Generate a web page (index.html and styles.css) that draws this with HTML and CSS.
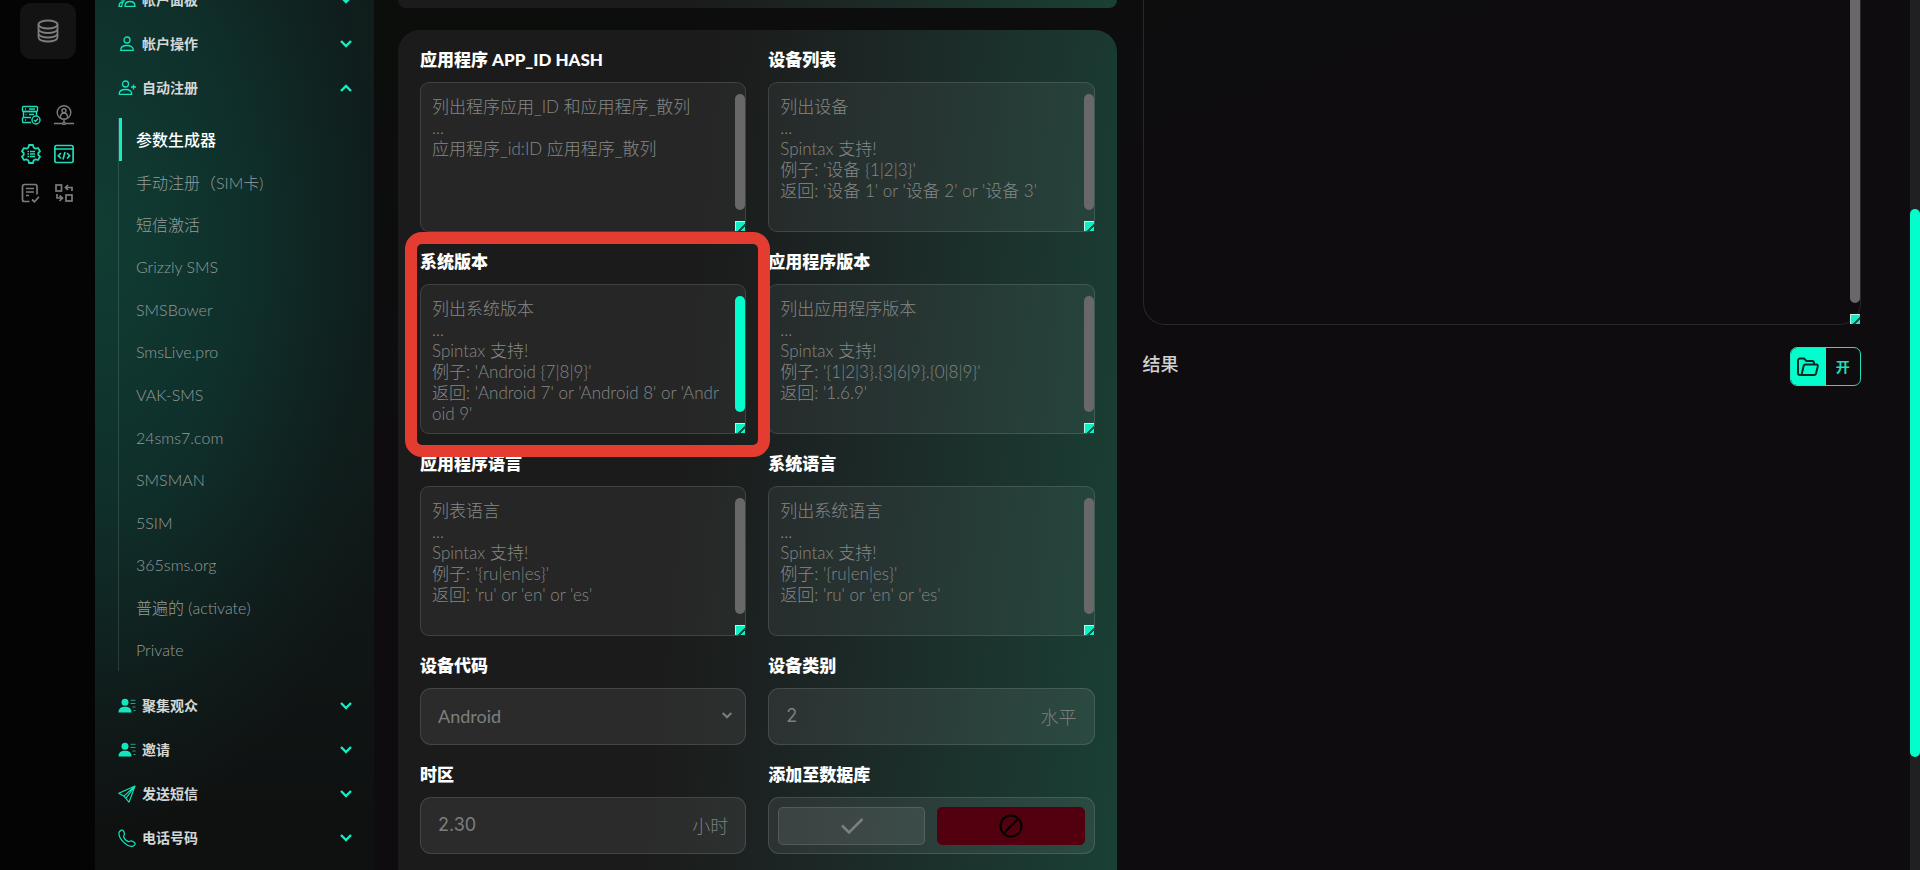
FILE: index.html
```html
<!DOCTYPE html>
<html lang="zh-CN">
<head>
    <meta charset="utf-8">
    <title>参数生成器</title>
    <link rel="stylesheet" href="styles.css">
</head>
<body>
    <svg class="defs" width="0" height="0" aria-hidden="true">
        <symbol id="down" viewBox="0 0 14 10"><path d="M2 2l5 5 5-5" fill="none" stroke="currentColor" stroke-width="2.4"/></symbol>
        <symbol id="up" viewBox="0 0 14 10"><path d="M2 8l5-5 5 5" fill="none" stroke="currentColor" stroke-width="2.4"/></symbol>
        <symbol id="people" viewBox="0 0 18 18"><g fill="none" stroke="currentColor" stroke-width="1.3"><circle cx="5" cy="7" r="2.2"/><circle cx="12" cy="5" r="3"/><path d="M1 15.3c0-3 1.500-4.500 4.300-4.500-1.300 1.200-1.600 2.600-1.600 4.500zM7 15.300c0-3 1.600-4.800 5-4.800s5 1.800 5 4.800z"/></g></symbol>
        <symbol id="person" viewBox="0 0 18 18"><g fill="none" stroke="currentColor" stroke-width="1.3"><circle cx="9" cy="5" r="3"/><path d="M2.700 15.300c0-3 2.300-4.800 6.300-4.800s6.300 1.800 6.300 4.800z" stroke-linejoin="round"/></g></symbol>
        <symbol id="person-add" viewBox="0 0 18 18"><g fill="none" stroke="currentColor" stroke-width="1.3"><circle cx="7.500" cy="5" r="3"/><path d="M1.200 15.300c0-3 2.300-4.800 6.300-4.800s6.300 1.800 6.300 4.800z" stroke-linejoin="round"/><path d="M15.500 5.500v5M13 8h5"/></g></symbol>
        <symbol id="audience" viewBox="0 0 18 18"><circle cx="7" cy="5.200" r="3.500" fill="currentColor"/><path d="M0.500 15.500c0-4 2.500-5.700 6.500-5.700s6.500 1.700 6.500 5.700z" fill="currentColor"/><path d="M12.500 3.300h5M12.500 6.500h5M14.500 10h3M15.500 13.500h2" stroke="currentColor" stroke-width="1" opacity=".7"/></symbol>
        <symbol id="plane" viewBox="0 0 18 18"><path d="M17 1L.8 8.200l5.200 3L11 17.200zM17 1L6 11.200M17 1L8.300 12.800" fill="none" stroke="currentColor" stroke-width="1.100" stroke-linejoin="round"/></symbol>
        <symbol id="phone" viewBox="0 0 18 18"><path d="M1 3.500C2 1.500 3.800.6 4.800 1.200c1 .9 1.600 2.300 1.700 3.800.1 1.200-1.200 1.500-.9 2.700.5 2 2.500 4.100 4.700 4.900 1.200.5 1.800-.9 3-.7 1.500.3 2.900 1 3.700 2.200.7 1.300-1 2.900-2.900 3.200C9 18 .2 9.500 1 3.500z" fill="none" stroke="currentColor" stroke-width="1.200"/></symbol>
    </svg>

    <div class="app">
        <aside class="rail">
            <button class="rail-main" aria-label="数据库">
                <svg width="24" height="24" viewBox="0 0 24 24" fill="none" stroke="currentColor" stroke-width="1.800"><ellipse cx="12" cy="5.500" rx="9.500" ry="4"/><path d="M2.500 5.500v13c0 2.200 4.200 4 9.500 4s9.500-1.800 9.500-4v-13M2.500 10c0 2.200 4.200 4 9.500 4s9.500-1.800 9.500-4M2.500 14.500c0 2.200 4.200 4 9.500 4s9.500-1.800 9.500-4"/></svg>
            </button>
            <div class="rail-icons">
                <a href="#" class="on" aria-label="服务器">
                    <svg width="20" height="20" viewBox="0 0 20 20" fill="none" stroke="currentColor" stroke-width="1.400"><rect x="1.500" y="1.500" width="15" height="5" rx="1"/><path d="M10 12.500H2.500v-6h13v4M10 17.500H2.500a1 1 0 0 1-1-1v-3a1 1 0 0 1 1-1M4 4h1M8 4h6M4.500 9.500h1M8 9.500h5M4 15h1"/><circle cx="15" cy="15" r="4"/><path d="M13 15l1.500 1.500 2.500-3"/></svg>
                </a>
                <a href="#" aria-label="代理">
                    <svg width="20" height="20" viewBox="0 0 20 20" fill="none" stroke="currentColor" stroke-width="1.400"><circle cx="10" cy="7.500" r="6.800"/><circle cx="10" cy="5.800" r="2"/><path d="M6.500 12.500c0-3 1-4.500 3.500-4.500s3.500 1.500 3.500 4.500M10 14.500v3M0 18.500h8.500M11.500 18.500H20"/><circle cx="10" cy="18.500" r="1.200"/></svg>
                </a>
                <a href="#" class="on" aria-label="设置">
                    <svg width="20" height="20" viewBox="0 0 20 20" fill="none" stroke="currentColor" stroke-width="1.800" stroke-linejoin="round"><path d="M8 1h4l.6 2.500 2 1.200L17 4l2 3.300L17.300 9v2l1.700 1.700L17 16l-2.400-.7-2 1.200L12 19H8l-.6-2.500-2-1.200L3 16l-2-3.300L2.700 11V9L1 7.300 3 4l2.400.7 2-1.200z"/><path d="M6.500 7.500h1.500M9 7.500h5M6.500 10h1.500M9 10h5M6.500 12.500h1.500M9 12.500h5" stroke-width="1.600"/></svg>
                </a>
                <a href="#" class="on" aria-label="代码">
                    <svg width="20" height="20" viewBox="0 0 20 20" fill="none" stroke="currentColor" stroke-width="1.700"><rect x=".9" y="1.500" width="18.200" height="17" rx="1.500"/><path d="M1 5h18M7 9l-2.700 2.700L7 14.500M13 9l2.700 2.700L13 14.500M11 8l-2 7.500"/></svg>
                </a>
                <a href="#" aria-label="任务">
                    <svg width="20" height="20" viewBox="0 0 20 20" fill="none" stroke="currentColor" stroke-width="1.700"><path d="M8.500 18.500h-5a2 2 0 0 1-2-2v-13a2 2 0 0 1 2-2H14a2 2 0 0 1 2 2v8M5 5.500h8M5 9h8M5 12.500h3M11 16.500l2.500 2.300 4.500-5"/></svg>
                </a>
                <a href="#" aria-label="交换">
                    <svg width="20" height="20" viewBox="0 0 20 20" fill="none" stroke="currentColor" stroke-width="1.700"><rect x="2" y="2" width="5.500" height="6"/><rect x="12" y="12" width="6" height="6"/><path d="M18 8V4.500h-6M14 2l-2.500 2.500L14 7M3 11v4h5M5.500 12.500L8.500 15 5.500 18"/></svg>
                </a>
            </div>
        </aside>

        <nav class="sidebar">
            <a href="#" class="menu"><svg class="mi"><use href="#people"/></svg>帐户面板<svg class="arrow"><use href="#down"/></svg></a>
            <a href="#" class="menu"><svg class="mi"><use href="#person"/></svg>帐户操作<svg class="arrow"><use href="#down"/></svg></a>
            <a href="#" class="menu"><svg class="mi"><use href="#person-add"/></svg>自动注册<svg class="arrow"><use href="#up"/></svg></a>
            <ul class="submenu">
                <li class="active"><a href="#">参数生成器</a></li>
                <li><a href="#">手动注册（SIM卡)</a></li>
                <li><a href="#">短信激活</a></li>
                <li><a href="#">Grizzly SMS</a></li>
                <li><a href="#">SMSBower</a></li>
                <li><a href="#">SmsLive.pro</a></li>
                <li><a href="#">VAK-SMS</a></li>
                <li><a href="#">24sms7.com</a></li>
                <li><a href="#">SMSMAN</a></li>
                <li><a href="#">5SIM</a></li>
                <li><a href="#">365sms.org</a></li>
                <li><a href="#">普遍的 (activate)</a></li>
                <li><a href="#">Private</a></li>
            </ul>
            <a href="#" class="menu"><svg class="mi"><use href="#audience"/></svg>聚集观众<svg class="arrow"><use href="#down"/></svg></a>
            <a href="#" class="menu"><svg class="mi"><use href="#audience"/></svg>邀请<svg class="arrow"><use href="#down"/></svg></a>
            <a href="#" class="menu"><svg class="mi"><use href="#plane"/></svg>发送短信<svg class="arrow"><use href="#down"/></svg></a>
            <a href="#" class="menu"><svg class="mi"><use href="#phone"/></svg>电话号码<svg class="arrow"><use href="#down"/></svg></a>
        </nav>

        <main class="content">
            <div class="left">
                <section class="card card-prev"></section>
                <section class="card form">
                    <div class="field">
                        <label for="appId">应用程序 APP_ID HASH</label>
                        <div class="area">
                            <textarea id="appId" placeholder="列出程序应用_ID 和应用程序_散列&#10;...&#10;应用程序_id:ID 应用程序_散列"></textarea>
                            <span class="thumb"></span><span class="grip"></span>
                        </div>
                    </div>
                    <div class="field">
                        <label for="devices">设备列表</label>
                        <div class="area">
                            <textarea id="devices" placeholder="列出设备&#10;...&#10;Spintax 支持!&#10;例子: '设备 {1|2|3}'&#10;返回: '设备 1' or '设备 2' or '设备 3'"></textarea>
                            <span class="thumb"></span><span class="grip"></span>
                        </div>
                    </div>
                    <div class="field marked">
                        <label for="sysVersion">系统版本</label>
                        <div class="area">
                            <textarea id="sysVersion" placeholder="列出系统版本&#10;...&#10;Spintax 支持!&#10;例子: 'Android {7|8|9}'&#10;返回: 'Android 7' or 'Android 8' or 'Android 9'"></textarea>
                            <span class="thumb"></span><span class="grip"></span>
                        </div>
                    </div>
                    <div class="field">
                        <label for="appVersion">应用程序版本</label>
                        <div class="area">
                            <textarea id="appVersion" placeholder="列出应用程序版本&#10;...&#10;Spintax 支持!&#10;例子: '{1|2|3}.{3|6|9}.{0|8|9}'&#10;返回: '1.6.9'"></textarea>
                            <span class="thumb"></span><span class="grip"></span>
                        </div>
                    </div>
                    <div class="field">
                        <label for="appLang">应用程序语言</label>
                        <div class="area">
                            <textarea id="appLang" placeholder="列表语言&#10;...&#10;Spintax 支持!&#10;例子: '{ru|en|es}'&#10;返回: 'ru' or 'en' or 'es'"></textarea>
                            <span class="thumb"></span><span class="grip"></span>
                        </div>
                    </div>
                    <div class="field">
                        <label for="sysLang">系统语言</label>
                        <div class="area">
                            <textarea id="sysLang" placeholder="列出系统语言&#10;...&#10;Spintax 支持!&#10;例子: '{ru|en|es}'&#10;返回: 'ru' or 'en' or 'es'"></textarea>
                            <span class="thumb"></span><span class="grip"></span>
                        </div>
                    </div>
                    <div class="field">
                        <label for="deviceCode">设备代码</label>
                        <div class="box">
                            <select id="deviceCode"><option>Android</option></select>
                            <svg class="caret"><use href="#down"/></svg>
                        </div>
                    </div>
                    <div class="field">
                        <label for="deviceClass">设备类别</label>
                        <div class="box"><input type="text" id="deviceClass" placeholder="2"><span class="unit">水平</span></div>
                    </div>
                    <div class="field">
                        <label for="timezone">时区</label>
                        <div class="box"><input type="text" id="timezone" placeholder="2.30"><span class="unit">小时</span></div>
                    </div>
                    <div class="field" role="group" aria-labelledby="addDb">
                        <span class="title" id="addDb">添加至数据库</span>
                        <div class="box choice">
                            <button class="yes" aria-label="是"><svg width="24" height="18" viewBox="0 0 24 18"><path d="M2 8.500l7 7L22.500 2" fill="none" stroke="currentColor" stroke-width="2.500"/></svg></button>
                            <button class="no" aria-label="否"><svg width="24" height="24" viewBox="0 0 24 24" fill="none" stroke="currentColor" stroke-width="2"><circle cx="12" cy="12" r="10.500"/><path d="M4.500 19.500l15-15"/></svg></button>
                        </div>
                    </div>
                </section>
            </div>

            <div class="right">
                <div class="area output">
                    <textarea aria-label="输出"></textarea>
                    <span class="thumb"></span><span class="grip"></span>
                </div>
                <div class="result">
                    <h2>结果</h2>
                    <button class="open">
                        <span class="folder"><svg width="22" height="20" viewBox="0 0 22 20" fill="none" stroke="currentColor" stroke-width="2" stroke-linejoin="round"><path d="M5.500 18H3a2 2 0 0 1-2-2V3.500a2 2 0 0 1 2-2h4L9.500 4H15a2 2 0 0 1 2 2v1.500M4.500 18l2-8.500c.2-1.200 1-2 2-2h11c1 0 1.500.8 1.300 1.700L19 16.500c-.2 1-1 1.500-1.800 1.500z"/></svg></span>
                        <span class="open-text">开</span>
                    </button>
                </div>
            </div>
        </main>

        <div class="page-scroll"><span></span></div>
    </div>
</body>
</html>
```
FILE: styles.css
```css
* {
    box-sizing: border-box;
}

body {
    margin: 0;
    height: 100vh;
    overflow: hidden;
    background-color: #0e0c0f;
    color: #fff;
    font-family: Lato, "Noto Sans CJK SC", sans-serif;
    font-size: 16px;
}

a {
    color: inherit;
    text-decoration: none;
}

button, input, select, textarea {
    font-family: inherit;
    color: inherit;
}

.defs {
    position: absolute;
}

.app {
    display: flex;
    height: 100vh;
    overflow: hidden;
}

/* icon rail */
.rail {
    flex: 0 0 95px;
    padding: 3px 19px 0 20px;
    background-color: #040405;
    color: #7d7d7d;
}

.rail-main {
    display: flex;
    align-items: center;
    justify-content: center;
    width: 56px;
    height: 56px;
    padding: 0;
    border: none;
    border-radius: 11px;
    background-color: #131313;
}

.rail-icons {
    display: grid;
    grid-template-columns: 20px 20px;
    gap: 19px 13px;
    margin: 46px 0 0 1px;
}

.rail-icons a {
    display: flex;
}

.rail-icons .on {
    color: #1fdcb6;
}

/* sidebar */
.sidebar {
    flex: 0 0 279px;
    padding: 0 21px 0 23px;
    background: radial-gradient(ellipse 340px 600px at 0 230px, #103d33 0%, #0f2f2b 45%, rgba(15, 32, 30, 0.6) 80%, rgba(15, 26, 25, 0) 100%), linear-gradient(#101c1a, #101c1b 40%, #0f1010);
}

.sidebar > :first-child {
    margin-top: -22px;
}

.menu {
    display: flex;
    align-items: center;
    height: 44px;
    color: #d3d8d7;
    font-size: 14px;
    line-height: 20px;
    font-weight: bold;
}

.mi {
    width: 18px;
    height: 18px;
    margin-right: 6px;
    color: #12e6bd;
}

.arrow {
    width: 14px;
    height: 10px;
    margin-left: auto;
    color: #12efc4;
}

.submenu {
    display: grid;
    grid-auto-rows: 1fr;
    height: 553px;
    margin: 8px 0 13px;
    padding: 0;
    list-style: none;
    border-left: 1px solid rgba(255, 255, 255, 0.12);
    color: #959c9a;
    font-weight: 300;
}

.submenu li {
    display: flex;
    align-items: center;
    padding-left: 17px;
}

.submenu .active {
    padding-left: 14px;
    border-left: 3px solid #12efc4;
    color: #fff;
    font-weight: 500;
}

/* content */
.content {
    flex: 1;
    display: grid;
    grid-template-columns: minmax(0, 1fr) minmax(0, 1fr);
    gap: 26px;
    padding: 0 49px 0 24px;
    background: linear-gradient(160deg, #0b0e0b, #0e0c0f 30%);
}

.card {
    background: linear-gradient(95deg, #1b1b1b 40%, #1c2927 65%, #1a4035 100%);
}

.card-prev {
    height: 8px;
    margin-bottom: 22px;
    border-radius: 0 0 22px 22px;
}

.form {
    display: grid;
    grid-template-columns: minmax(0, 1fr) minmax(0, 1fr);
    gap: 18px 22px;
    padding: 18px 22px 40px;
    border-radius: 22px 22px 0 0;
}

.field {
    position: relative;
}

.field label,
.title {
    display: block;
    margin-bottom: 10px;
    font-size: 17px;
    line-height: 24px;
    font-weight: 900;
}

/* red frame over the field being explained */
.marked::after {
    content: "";
    position: absolute;
    inset: -18px -24px -23px -15px;
    border: 12px solid #e43c31;
    border-radius: 17px;
    z-index: 2;
    pointer-events: none;
}

.area {
    position: relative;
}

.area textarea {
    display: block;
    width: 100%;
    height: 150px;
    padding: 13px 26px 8px 11px;
    border: 1px solid rgba(255, 255, 255, 0.12);
    border-radius: 9px;
    background-color: rgba(255, 255, 255, 0.05);
    font-size: 17px;
    font-weight: 300;
    line-height: 21px;
    word-break: break-all;
    resize: none;
    overflow: hidden;
}

::placeholder {
    color: #858887;
    opacity: 1;
}

.thumb {
    position: absolute;
    top: 12px;
    right: 1px;
    bottom: 22px;
    width: 10px;
    border-radius: 5px;
    background-color: #686868;
}

.marked .thumb {
    background-color: #00ffcd;
}

.grip {
    position: absolute;
    right: 1px;
    bottom: 1px;
    width: 10px;
    height: 10px;
    border-top: 1px solid #b8f5e8;
    border-left: 1px solid #b8f5e8;
    background: linear-gradient(135deg, #0fefc6 60%, #075b4b 60%, #075b4b 75%, #0fefc6 75%);
}

.box {
    display: flex;
    align-items: center;
    height: 57px;
    padding: 0 17px 2px;
    border: 1px solid rgba(255, 255, 255, 0.12);
    border-radius: 11px;
    background-color: rgba(255, 255, 255, 0.07);
    color: #7c7f7e;
    font-size: 18px;
}

.box input,
.box select {
    flex: 1;
    min-width: 0;
    height: 100%;
    padding: 0;
    border: none;
    outline: none;
    appearance: none;
    background: none;
    font-size: 18px;
}

.box input {
    font-family: Inter, sans-serif;
}

.box input::placeholder {
    color: #7c7f7e;
}

.unit {
    font-weight: 300;
}

.caret {
    width: 12px;
    height: 9px;
    margin-right: -5px;
}

.choice {
    gap: 12px;
    padding: 0 9px;
}

.choice button {
    flex: 1;
    display: flex;
    align-items: center;
    justify-content: center;
    height: 38px;
    border: 1px solid rgba(255, 255, 255, 0.12);
    border-radius: 5px;
}

.yes {
    background-color: rgba(255, 255, 255, 0.08);
}

.choice .no {
    background-color: #52000f;
    border-color: #52000f;
    color: #000;
}

/* right column */
.output textarea {
    height: 325px;
    border-color: #29282a;
    border-top: none;
    border-radius: 0 0 22px 22px;
    background: none;
}

.output .thumb {
    top: 0;
    border-radius: 0 0 5px 5px;
}

.result {
    display: flex;
    align-items: flex-start;
    justify-content: space-between;
    margin-top: 22px;
}

.result h2 {
    margin: 0;
    color: #d0d0d0;
    font-size: 18px;
    line-height: 34px;
    font-weight: 500;
}

.open {
    display: flex;
    align-items: stretch;
    width: 71px;
    height: 39px;
    padding: 0;
    overflow: hidden;
    border: 1px solid #1fe0ba;
    border-radius: 7px;
    background: none;
    color: #1fe0ba;
    font-size: 14px;
    line-height: 20px;
    font-weight: bold;
}

.open span {
    flex: 1;
    display: flex;
    align-items: center;
    justify-content: center;
}

.open .folder {
    background-color: #00ffcd;
    color: #0b2822;
}

.page-scroll {
    flex: 0 0 10px;
    background-color: #201f21;
}

.page-scroll span {
    display: block;
    height: 63%;
    margin-top: 209px;
    border-radius: 5px;
    background-color: #00ffcd;
}
```
